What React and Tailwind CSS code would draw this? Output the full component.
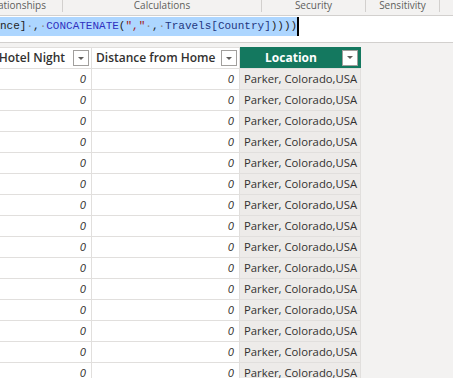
import React from "react";

const rows = Array.from({ length: 15 }, (_, i) => i);

const FilterButton = () => (
  <div className="w-[16px] h-[16px] shrink-0 bg-white border border-[#a19f9d] flex items-center justify-center">
    <svg width="8" height="5" viewBox="0 0 8 5">
      <path d="M1 1h6L4 4z" fill="#605e5c" />
    </svg>
  </div>
);

const Dot = () => <span className="text-[#8a8886]">·</span>;

const App = () => {
  return (
    <div className="w-[453px] h-[378px] overflow-hidden bg-[#f3f2f1] font-['Open_Sans',sans-serif] text-[#323130]">
      {/* ribbon group labels */}
      <div className="h-[16px] flex border-b border-[#d2d0ce] text-[10px] leading-[11px] text-[#605e5c]">
        <div className="w-[63px] border-r border-[#d2d0ce] h-[12px] overflow-hidden whitespace-nowrap flex justify-end pr-[16px]">
          lationships
        </div>
        <div className="w-[199px] border-r border-[#d2d0ce] h-[12px] text-center">Calculations</div>
        <div className="w-[104px] border-r border-[#d2d0ce] h-[12px] text-center">Security</div>
        <div className="w-[74px] border-r border-[#d2d0ce] h-[12px] text-center">Sensitivity</div>
      </div>

      {/* formula bar */}
      <div className="h-[27px] bg-white border-b border-[#d2d0ce] flex items-start pt-[1px]">
        <div className="h-[19px] flex items-center bg-[#add6ff] font-['Liberation_Mono',monospace] text-[11px] whitespace-pre text-[#1e1e1e]">
          <span>nce]</span>
          <Dot />
          <span>,</span>
          <Dot />
          <span className="text-[#3030c0]">CONCATENATE</span>
          <span>(</span>
          <span className="text-[#a31515]">","</span>
          <Dot />
          <span>,</span>
          <Dot />
          <span className="text-[#1f377f]">Travels[Country]</span>
          <span>))))</span>
        </div>
        <div className="w-[2px] h-[19px] bg-black" />
      </div>

      {/* table */}
      <div className="mt-[4px] w-[361px] text-[11.3px]">
        <div className="flex h-[22px] border-t border-b border-[#e1dfdd] font-semibold text-[12px] text-[#323130]">
          <div className="w-[92px] bg-white border-r border-[#e1dfdd] flex items-center justify-end gap-[8px] pr-[2px] whitespace-nowrap overflow-hidden">
            <span>Hotel Night</span>
            <FilterButton />
          </div>
          <div className="w-[148px] bg-white border-r border-[#e1dfdd] flex items-center pl-[4px] pr-[2px] whitespace-nowrap">
            <span className="flex-1">Distance from Home</span>
            <FilterButton />
          </div>
          <div className="w-[121px] -mt-[1px] h-[21px] bg-[#14785f] flex items-center pr-[3px] text-white font-bold">
            <span className="flex-1 text-center">Location</span>
            <FilterButton />
          </div>
        </div>
        {rows.map((r) => (
          <div key={r} className="flex h-[21px] border-b border-[#e1dfdd]">
            <div className="w-[92px] bg-white border-r border-[#e1dfdd] flex items-center justify-end pr-[5px] italic">0</div>
            <div className="w-[148px] bg-white border-r border-[#e1dfdd] flex items-center justify-end pr-[5px] italic">0</div>
            <div className="w-[121px] bg-[#edebe9] border-r border-[#e1dfdd] flex items-center pl-[4px] whitespace-nowrap">
              Parker, Colorado,USA
            </div>
          </div>
        ))}
      </div>
    </div>
  );
};

export default App;
